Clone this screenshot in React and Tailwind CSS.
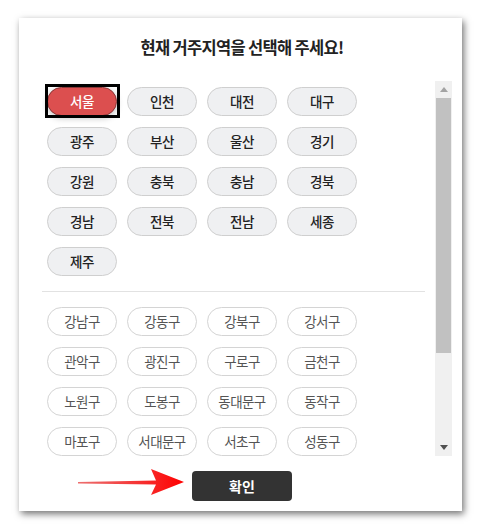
import React from "react"

const cities = ["서울", "인천", "대전", "대구", "광주", "부산", "울산", "경기", "강원", "충북", "충남", "경북", "경남", "전북", "전남", "세종", "제주"]

const districts = [
  "강남구", "강동구", "강북구", "강서구",
  "관악구", "광진구", "구로구", "금천구",
  "노원구", "도봉구", "동대문구", "동작구",
  "마포구", "서대문구", "서초구", "성동구",
  "성북구", "송파구", "양천구", "영등포구",
  "용산구", "은평구", "종로구", "중구",
  "중랑구",
]

const font = { fontFamily: '"Noto Sans CJK KR", "Noto Sans", sans-serif' }

// drawn scrollbar, the page's own one is hidden in the headless browser
const ScrollBar = () => (
  <div className="flex w-[17px] flex-col bg-[#f0f0f0]">
    <div className="flex h-[17px] items-center justify-center">
      <svg width="8" height="5" viewBox="0 0 8 5"><polygon points="0,5 4,0 8,5" fill="#a3a3a3" /></svg>
    </div>
    <div className="mx-[1px] h-[255px] bg-[#c1c1c1]"></div>
    <div className="flex-1"></div>
    <div className="flex h-[17px] items-center justify-center">
      <svg width="8" height="5" viewBox="0 0 8 5"><polygon points="0,0 8,0 4,5" fill="#505050" /></svg>
    </div>
  </div>
)

const App = () => {
  const selected = "서울"
  return (
    <div className="min-h-[531px] w-[481px] bg-white pt-[18px] pl-[19px]" style={font}>
      <div className="flex h-[493px] w-[443px] flex-col bg-white shadow-[2px_3px_7px_rgba(0,0,0,0.55)]">
        <h2 className="mt-[18px] pl-[3px] text-center text-[16.5px] leading-[22px] font-bold tracking-[-0.7px] whitespace-pre text-[#222]">
          현재 거주지역을 선택해 주세요!
        </h2>

        <div className="mt-[23px] mr-[10px] ml-[23px] flex h-[375px]">
          <div className="flex-1 overflow-hidden">
            <div className="pr-[10px] pt-[6px] pb-[6px]">
              <div className="grid grid-cols-[repeat(4,70px)] gap-x-[10px] gap-y-[11px] pl-[5px]">
                {cities.map((c) => (
                  c === selected ? (
                    <button key={c} className="relative h-[29px] rounded-full border border-[#8a3636] bg-[#dc4f4f] text-[13.5px] font-medium tracking-[-0.5px] text-white shadow-[0_2px_6px_rgba(0,0,0,0.25)]">
                      {c}
                      <span className="absolute -top-[4px] -right-[4px] -bottom-[3px] -left-[3px] border-[3px] border-black"></span>
                    </button>
                  ) : (
                    <button key={c} className="h-[29px] rounded-full border border-[#cfcfcf] bg-[#eff0f2] text-[13.5px] font-medium tracking-[-0.5px] text-[#222]">
                      {c}
                    </button>
                  )
                ))}
              </div>

              <div className="my-[15px] h-px bg-[#e2e2e2]"></div>

              <div className="grid grid-cols-[repeat(4,70px)] gap-x-[10px] gap-y-[11px] pl-[5px]">
                {districts.map((d) => (
                  <button key={d} className="h-[29px] rounded-full border border-[#d4d4d4] bg-white text-[13.5px] tracking-[-0.6px] text-[#555]">
                    {d}
                  </button>
                ))}
              </div>
            </div>
          </div>
          <ScrollBar />
        </div>

        <div className="relative mt-[15px] flex justify-center pl-[3px]">
          <svg className="absolute top-[-2px] left-[59px]" width="108" height="28" viewBox="0 0 108 28">
            <defs>
              <linearGradient id="shaft" x1="0" x2="1" y1="0" y2="0">
                <stop offset="0" stopColor="#e53030" stopOpacity="0.7" />
                <stop offset="1" stopColor="#ff0000" />
              </linearGradient>
            </defs>
            <polygon points="0,13 78,11.5 73,0 106,13 73,26 78,15.5 0,14.5" fill="url(#shaft)" />
          </svg>
          <button className="h-[30px] w-[100px] rounded-[4px] bg-[#333333] text-[14px] font-bold text-white">
            확인
          </button>
        </div>
      </div>
    </div>
  )
}

export default App
